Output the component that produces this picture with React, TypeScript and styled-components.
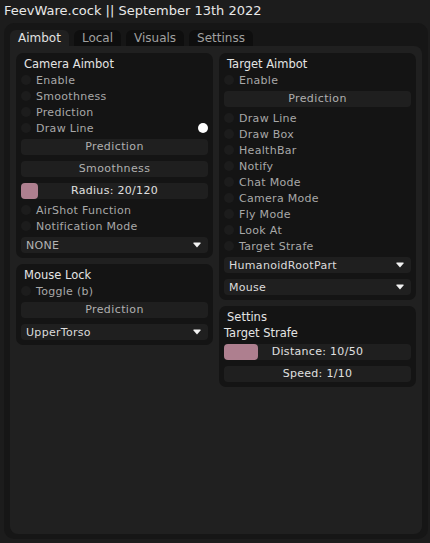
import styled, { createGlobalStyle } from 'styled-components';

const GlobalStyle = createGlobalStyle`
  body {
    margin: 0;
    background: #1c1c1c;
    font-family: 'DejaVu Sans', 'Liberation Sans', sans-serif;
  }
`;

const StyledApp = styled.div`
  display: flex;
  flex-direction: column;
  width: 430px;
  height: 543px;
  background: #1c1c1c;
`;

const StyledTitle = styled.div`
  height: 23px;
  line-height: 22px;
  padding-left: 4px;
  font-size: 13px;
  color: #e8e8e8;
  white-space: nowrap;
`;

const StyledFrame = styled.div`
  flex: 1;
  display: flex;
  flex-direction: column;
  margin: 0 2px 4px 4px;
  padding: 7px 6px 5px;
  border-radius: 10px;
  background: #161616;
`;

const StyledTabs = styled.div`
  display: flex;
  gap: 5px;
  height: 16px;
`;

const StyledTab = styled.div<{ $active: boolean }>`
  padding: 0 8px;
  line-height: 16px;
  font-size: 12px;
  border-radius: 6px 6px 0 0;
  background: ${(p) => (p.$active ? '#202020' : '#0e0e0e')};
  color: ${(p) => (p.$active ? '#e2e2e2' : '#a0a0a0')};
`;

const StyledPanel = styled.div`
  flex: 1;
  display: grid;
  grid-template-columns: 1fr 1fr;
  gap: 6px;
  align-items: start;
  padding: 7px 6px;
  border-radius: 0 8px 8px 8px;
  background: #202020;
`;

const StyledColumn = styled.div`
  display: flex;
  flex-direction: column;
  gap: 6px;
`;

const StyledSection = styled.div`
  display: flex;
  flex-direction: column;
  padding: 4px 5px 2px;
  border-radius: 7px;
  background: #141414;
`;

const StyledSectionTitle = styled.div<{ $flush?: boolean }>`
  height: ${(p) => (p.$flush ? 16 : 15)}px;
  line-height: ${(p) => (p.$flush ? 16 : 15)}px;
  padding-left: ${(p) => (p.$flush ? 0 : 3)}px;
  font-size: 11.5px;
  color: #e4e4e4;
`;

const StyledToggle = styled.div`
  display: flex;
  align-items: center;
  gap: 5px;
  height: 16px;
  font-size: 11px;
  letter-spacing: 0.3px;
  color: #a8a8a8;
`;

const StyledDot = styled.span`
  width: 10px;
  height: 10px;
  border-radius: 50%;
  background: #1c1c1c;
`;

const StyledSwatch = styled.span`
  width: 10px;
  height: 10px;
  margin-left: auto;
  border-radius: 50%;
  background: #ffffff;
`;

const StyledButton = styled.div`
  height: 16px;
  margin: 3px 0;
  line-height: 16px;
  text-align: center;
  font-size: 11px;
  letter-spacing: 0.4px;
  color: #b0b0b0;
  border-radius: 4px;
  background: #1f1f1f;
`;

const StyledSlider = styled.div`
  position: relative;
  height: 16px;
  margin: 3px 0;
  border-radius: 4px;
  background: #1f1f1f;
`;

const StyledSliderFill = styled.div`
  position: absolute;
  top: 0;
  left: 0;
  bottom: 0;
  border-radius: 4px;
  background: #ae7f8f;
`;

const StyledSliderText = styled.div`
  position: relative;
  line-height: 16px;
  text-align: center;
  font-size: 11px;
  letter-spacing: 0.3px;
  color: #e0e0e0;
`;

const StyledDropdown = styled.div<{ $muted?: boolean }>`
  display: flex;
  align-items: center;
  justify-content: space-between;
  height: 16px;
  margin: 3px 0;
  padding: 0 7px 0 5px;
  font-size: 11px;
  letter-spacing: 0.3px;
  color: ${(p) => (p.$muted ? '#b4b4b4' : '#dcdcdc')};
  border-radius: 4px;
  background: #1f1f1f;
`;

const Toggle = ({ label, swatch }: { label: string; swatch?: boolean }) => (
  <StyledToggle>
    <StyledDot />
    {label}
    {swatch && <StyledSwatch />}
  </StyledToggle>
);

const Slider = ({ label, value, min, max }: { label: string; value: number; min: number; max: number }) => (
  <StyledSlider>
    <StyledSliderFill style={{ width: `${((value - min) / (max - min)) * 100}%` }} />
    <StyledSliderText>
      {label}: {value}/{max}
    </StyledSliderText>
  </StyledSlider>
);

const Dropdown = ({ value, muted }: { value: string; muted?: boolean }) => (
  <StyledDropdown $muted={muted}>
    {value}
    <svg width="8" height="6" viewBox="0 0 8 6">
      <path d="M0.5 0.5 H7.5 V1.5 L4 5.5 L0.5 1.5 Z" fill="#f2f2f2" />
    </svg>
  </StyledDropdown>
);

const tabs = ['Aimbot', 'Local', 'Visuals', 'Settinss'];
const targetToggles = ['Draw Line', 'Draw Box', 'HealthBar', 'Notify', 'Chat Mode', 'Camera Mode', 'Fly Mode', 'Look At', 'Target Strafe'];

const App = () => (
  <StyledApp>
    <GlobalStyle />
    <StyledTitle>FeevWare.cock || September 13th 2022</StyledTitle>
    <StyledFrame>
      <StyledTabs>
        {tabs.map((tab, i) => (
          <StyledTab key={tab} $active={i === 0}>
            {tab}
          </StyledTab>
        ))}
      </StyledTabs>
      <StyledPanel>
        <StyledColumn>
          <StyledSection>
            <StyledSectionTitle>Camera Aimbot</StyledSectionTitle>
            <Toggle label="Enable" />
            <Toggle label="Smoothness" />
            <Toggle label="Prediction" />
            <Toggle label="Draw Line" swatch />
            <StyledButton>Prediction</StyledButton>
            <StyledButton>Smoothness</StyledButton>
            <Slider label="Radius" value={20} min={10} max={120} />
            <Toggle label="AirShot Function" />
            <Toggle label="Notification Mode" />
            <Dropdown value="NONE" muted />
          </StyledSection>
          <StyledSection>
            <StyledSectionTitle>Mouse Lock</StyledSectionTitle>
            <Toggle label="Toggle (b)" />
            <StyledButton>Prediction</StyledButton>
            <Dropdown value="UpperTorso" />
          </StyledSection>
        </StyledColumn>
        <StyledColumn>
          <StyledSection>
            <StyledSectionTitle>Target Aimbot</StyledSectionTitle>
            <Toggle label="Enable" />
            <StyledButton>Prediction</StyledButton>
            {targetToggles.map((t) => (
              <Toggle key={t} label={t} />
            ))}
            <Dropdown value="HumanoidRootPart" />
            <Dropdown value="Mouse" />
          </StyledSection>
          <StyledSection>
            <StyledSectionTitle>Settins</StyledSectionTitle>
            <StyledSectionTitle $flush>Target Strafe</StyledSectionTitle>
            <Slider label="Distance" value={10} min={1} max={50} />
            <Slider label="Speed" value={1} min={1} max={10} />
          </StyledSection>
        </StyledColumn>
      </StyledPanel>
    </StyledFrame>
  </StyledApp>
);

export default App;
